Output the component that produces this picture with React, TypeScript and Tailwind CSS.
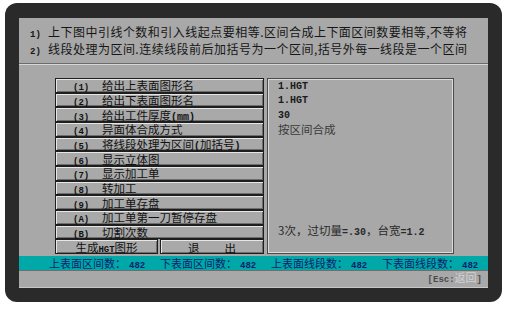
import React from 'react';

const cjk = { fontFamily: '"Noto Sans CJK SC", "Noto Sans", sans-serif' };
const mono = { fontFamily: '"Liberation Mono", "DejaVu Sans Mono", monospace' };

type MenuItem = { key: string; label: React.ReactNode };

const M: React.FC<{ children: React.ReactNode; size?: string }> = ({ children, size = 'text-[10px]' }) => (
  <span style={mono} className={`${size} font-bold tracking-normal`}>{children}</span>
);

const menu: MenuItem[] = [
  { key: '(1)', label: '给出上表面图形名' },
  { key: '(2)', label: '给出下表面图形名' },
  { key: '(3)', label: <>给出工件厚度<M>(mm)</M></> },
  { key: '(4)', label: '异面体合成方式' },
  { key: '(5)', label: <>将线段处理为区间<M>(</M>加括号<M>)</M></> },
  { key: '(6)', label: '显示立体图' },
  { key: '(7)', label: '显示加工单' },
  { key: '(8)', label: '转加工' },
  { key: '(9)', label: '加工单存盘' },
  { key: '(A)', label: '加工单第一刀暂停存盘' },
  { key: '(B)', label: '切割次数' },
];

const btn =
  'border border-[#1e1e1e] bg-[#a9a9a9] shadow-[inset_1px_1px_0_#e6e6e6,inset_-1px_-1px_0_#6e6e6e] flex items-center text-[#111] text-[11.5px] leading-[10px] whitespace-nowrap';

const stats = [
  ['上表面区间数：', '482'],
  ['下表面区间数：', '482'],
  ['上表面线段数：', '482'],
  ['下表面线段数：', '482'],
];

export default function App() {
  return (
    <div className="w-[510px] h-[312px] bg-white pt-[3px] pl-[5px]">
      <div className="w-[497px] h-[299px] rounded-[12px] bg-[#2a2a2a] pt-[15px] pl-[14px]">
        <div className="w-[469px] h-[270px] bg-[#a8a8a8] flex flex-col" style={cjk}>
          {/* header */}
          <div className="h-[45px] pt-[7px] pl-[11px] text-[12px] leading-[14px] tracking-[0.48px] text-[#161616] whitespace-nowrap">
            <div>
              <span className="inline-block w-[18px]"><M size="text-[9px]">1)</M></span>
              上下图中引线个数和引入线起点要相等.区间合成上下面区间数要相等,不等将
            </div>
            <div>
              <span className="inline-block w-[18px]"><M size="text-[9px]">2)</M></span>
              线段处理为区间.连续线段前后加括号为一个区间,括号外每一线段是一个区间
            </div>
          </div>
          <div className="h-px bg-[#6c6c6c]" />
          <div className="h-px bg-[#d6d6d6]" />

          {/* main */}
          <div className="flex h-[191px] pt-[13px] pl-[36px]">
            <div className="w-[209px] h-[176px] grid grid-rows-12">
              {menu.map(m => (
                <div key={m.key} className={btn}>
                  <span className="block pl-[17px] pt-[3px]">
                    <span className="inline-block w-[29px]"><M size="text-[9px]">{m.key}</M></span>
                    {m.label}
                  </span>
                </div>
              ))}
              <div className="flex gap-[2px]">
                <div className={`${btn} w-[103px] justify-center`}>
                  <span className="block pt-[3px]">生成<M size="text-[9px]">HGT</M>图形</span>
                </div>
                <div className={`${btn} flex-1 justify-center`}>
                  <span className="block pt-[3px] tracking-[25px] pl-[25px]">退出</span>
                </div>
              </div>
            </div>

            <div className="ml-[3px] w-[187px] h-[176px] border border-[#4a4a4a] shadow-[inset_1px_1px_0_#dcdcdc,inset_-1px_-1px_0_#dcdcdc] grid grid-rows-12 pl-[10px] text-[#1a1a1a] whitespace-nowrap">
              <div className="flex items-center"><M>1.HGT</M></div>
              <div className="flex items-center"><M>1.HGT</M></div>
              <div className="flex items-center"><M>30</M></div>
              <div className="flex items-center text-[11.5px] text-[#3a3a3a]">按区间合成</div>
              <div />
              <div />
              <div />
              <div />
              <div />
              <div />
              <div className="flex items-center text-[11.5px] text-[#2a2a2a]">
                <span>3次，过切量<M>=.30</M>，台宽<M>=1.2</M></span>
              </div>
              <div />
            </div>
          </div>

          {/* status bar */}
          <div className="h-[14px] pt-[2px] bg-[#00a8a8] flex items-center pl-[30px] text-[11px] leading-[12px] text-[#0a1f6e] whitespace-nowrap">
            {stats.map(([k, v], i) => (
              <div key={i} className="w-[111px] shrink-0">
                <span>{k}</span>
                <span className="pl-[3px]"><M size="text-[9px]">{v}</M></span>
              </div>
            ))}
          </div>
          <div className="h-px bg-[#6e6e6e]" />
          <div className="flex-1 flex items-center justify-end pr-[6px] text-[#4a4a4a]">
            <span className="text-[11px] leading-[13px]">
              <M size="text-[9px]">[Esc:</M>
              <span className="text-[#d2d2d2]">返回</span>
              <M size="text-[9px]">]</M>
            </span>
          </div>
          <div className="h-px bg-[#c8c8c8]" />
        </div>
      </div>
    </div>
  );
}
